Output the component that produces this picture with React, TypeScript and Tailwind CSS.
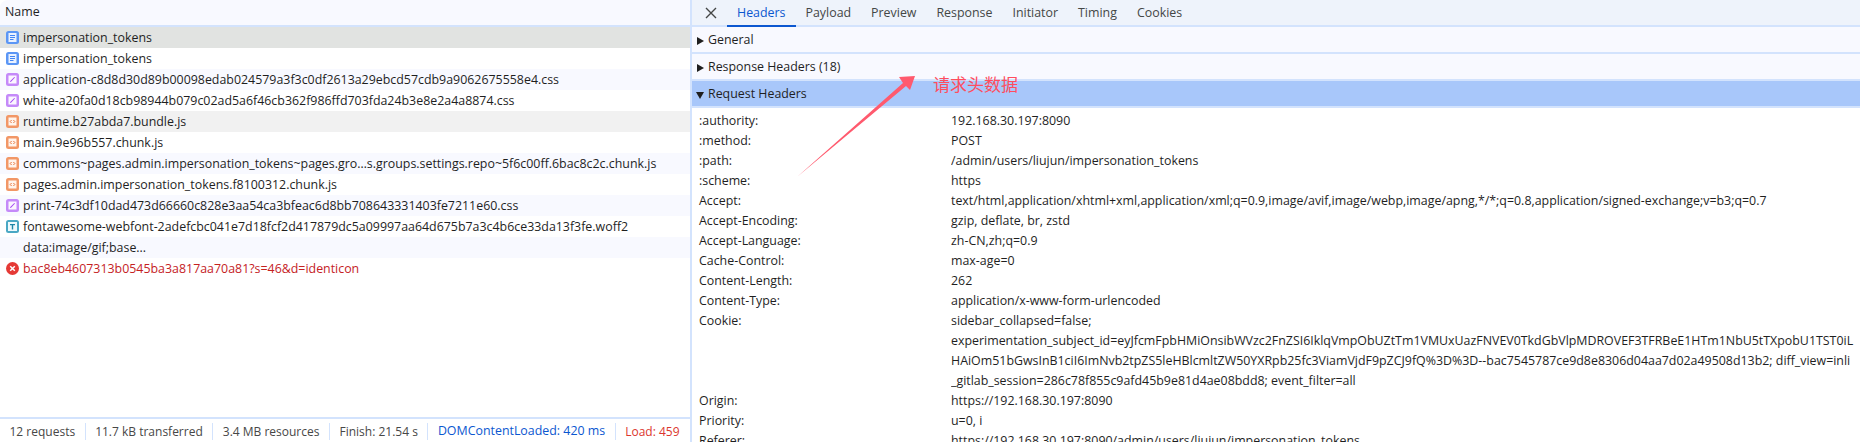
import React from "react";

const FONT = "font-['Open_Sans','Noto_Sans_CJK_SC',sans-serif]";

function DocIcon() {
  return (
    <svg width="13" height="13" viewBox="0 0 13 13" className="shrink-0">
      <rect width="13" height="13" rx="2.5" fill="#5b96f5" />
      <rect x="2.5" y="2" width="8" height="9" fill="#eaf2ff" />
      <path d="M4 4.5h5M4 6.5h5M4 8.5h3.5" stroke="#4285f4" strokeWidth="1" />
    </svg>
  );
}
function CssIcon() {
  return (
    <svg width="13" height="13" viewBox="0 0 13 13" className="shrink-0">
      <rect width="13" height="13" rx="2.5" fill="#c58af9" />
      <rect x="2.5" y="2.5" width="8" height="8" fill="#fbf6ff" />
      <path d="M4 9l1-.2L9 4.6 8.3 4 4.3 8z" fill="#a142f4" />
    </svg>
  );
}
function JsIcon() {
  return (
    <svg width="13" height="13" viewBox="0 0 13 13" className="shrink-0">
      <rect width="13" height="13" rx="2.5" fill="#f29766" />
      <rect x="2.5" y="2.5" width="8" height="8" fill="#fff4ec" />
      <path d="M5.6 5L4.2 6.5l1.4 1.5M7.4 5l1.4 1.5L7.4 8" stroke="#e8743b" strokeWidth="1" fill="none" />
    </svg>
  );
}
function FontIcon() {
  return (
    <svg width="13" height="13" viewBox="0 0 13 13" className="shrink-0">
      <rect width="13" height="13" rx="2.5" fill="#4aa8c4" />
      <rect x="2" y="2" width="9" height="9" fill="#eefafd" />
      <path d="M4 4h5v1.3H7.2V9.5H5.8V5.3H4z" fill="#1f87a8" />
    </svg>
  );
}
function ErrIcon() {
  return (
    <svg width="13" height="13" viewBox="0 0 13 13" className="shrink-0">
      <circle cx="6.5" cy="6.5" r="6.5" fill="#e53935" />
      <path d="M4.2 4.2l4.6 4.6M8.8 4.2l-4.6 4.6" stroke="#fff" strokeWidth="1.5" />
    </svg>
  );
}

const rows: { name: string; icon: React.ReactNode; bg: string; red?: boolean }[] = [
  { name: "impersonation_tokens", icon: <DocIcon />, bg: "bg-[#e1e3e1]" },
  { name: "impersonation_tokens", icon: <DocIcon />, bg: "bg-white" },
  { name: "application-c8d8d30d89b00098edab024579a3f3c0df2613a29ebcd57cdb9a9062675558e4.css", icon: <CssIcon />, bg: "bg-[#f8f9ff]" },
  { name: "white-a20fa0d18cb98944b079c02ad5a6f46cb362f986ffd703fda24b3e8e2a4a8874.css", icon: <CssIcon />, bg: "bg-white" },
  { name: "runtime.b27abda7.bundle.js", icon: <JsIcon />, bg: "bg-[#f1f1f1]" },
  { name: "main.9e96b557.chunk.js", icon: <JsIcon />, bg: "bg-white" },
  { name: "commons~pages.admin.impersonation_tokens~pages.gro…s.groups.settings.repo~5f6c00ff.6bac8c2c.chunk.js", icon: <JsIcon />, bg: "bg-[#f8f9ff]" },
  { name: "pages.admin.impersonation_tokens.f8100312.chunk.js", icon: <JsIcon />, bg: "bg-white" },
  { name: "print-74c3df10dad473d66660c828e3aa54ca3bfeac6d8bb708643331403fe7211e60.css", icon: <CssIcon />, bg: "bg-[#f8f9ff]" },
  { name: "fontawesome-webfont-2adefcbc041e7d18fcf2d417879dc5a09997aa64d675b7a3c4b6ce33da13f3fe.woff2", icon: <FontIcon />, bg: "bg-white" },
  { name: "data:image/gif;base...", icon: <span className="w-[13px] shrink-0" />, bg: "bg-[#f8f9ff]" },
  { name: "bac8eb4607313b0545ba3a817aa70a81?s=46&d=identicon", icon: <ErrIcon />, bg: "bg-white", red: true },
];

const headers: [string, string[]][] = [
  [":authority:", ["192.168.30.197:8090"]],
  [":method:", ["POST"]],
  [":path:", ["/admin/users/liujun/impersonation_tokens"]],
  [":scheme:", ["https"]],
  ["Accept:", ["text/html,application/xhtml+xml,application/xml;q=0.9,image/avif,image/webp,image/apng,*/*;q=0.8,application/signed-exchange;v=b3;q=0.7"]],
  ["Accept-Encoding:", ["gzip, deflate, br, zstd"]],
  ["Accept-Language:", ["zh-CN,zh;q=0.9"]],
  ["Cache-Control:", ["max-age=0"]],
  ["Content-Length:", ["262"]],
  ["Content-Type:", ["application/x-www-form-urlencoded"]],
  ["Cookie:", [
    "sidebar_collapsed=false;",
    "experimentation_subject_id=eyJfcmFpbHMiOnsibWVzc2FnZSI6IklqVmpObUZtTm1VMUxUazFNVEV0TkdGbVlpMDROVEF3TFRBeE1HTm1NbU5tTXpobU1TST0iL",
    "HAiOm51bGwsInB1ciI6ImNvb2tpZS5leHBlcmltZW50YXRpb25fc3ViamVjdF9pZCJ9fQ%3D%3D--bac7545787ce9d8e8306d04aa7d02a49508d13b2; diff_view=inli",
    "_gitlab_session=286c78f855c9afd45b9e81d4ae08bdd8; event_filter=all",
  ]],
  ["Origin:", ["https://192.168.30.197:8090"]],
  ["Priority:", ["u=0, i"]],
  ["Referer:", ["https://192.168.30.197:8090/admin/users/liujun/impersonation_tokens"]],
];

const tabs = ["Headers", "Payload", "Preview", "Response", "Initiator", "Timing", "Cookies"];

const stats: [string, string][] = [
  ["12 requests", "text-[#474747] text-[12px]"],
  ["11.7 kB transferred", "text-[#474747] text-[12px]"],
  ["3.4 MB resources", "text-[#474747] text-[12px]"],
  ["Finish: 21.54 s", "text-[#474747] text-[12px]"],
  ["DOMContentLoaded: 420 ms", "text-[#0b57d0] text-[12.4px]"],
  ["Load: 459", "text-[#dc362e] text-[12px]"],
];

function Section({ label, open, active }: { label: string; open?: boolean; active?: boolean }) {
  return (
    <div className={`h-[27px] flex items-center gap-[4px] pl-[4px] pt-[2px] border-b-2 border-[#d3e3fd] ${active ? "bg-[#a8c7fa]" : "bg-[#f8f9ff]"}`}>
      <svg width="8" height="8" viewBox="0 0 8 8" className="shrink-0">
        {open ? <path d="M0 1h8L4 8z" fill="#1f1f1f" /> : <path d="M1 0l7 4-7 4z" fill="#1f1f1f" />}
      </svg>
      <span>{label}</span>
    </div>
  );
}

export default function App() {
  return (
    <div className={`relative flex h-[442px] w-[1860px] overflow-hidden bg-white text-[12.4px] leading-none text-[#1f1f1f] ${FONT}`}>
      <div className="flex w-[690px] shrink-0 flex-col">
        <div className="h-[27px] shrink-0 overflow-hidden rounded-tl-lg border-b-2 border-[#d3e3fd] bg-[#f8f9ff] flex items-center pl-[5px]">
          <span>Name</span>
        </div>
        {rows.map((r, i) => (
          <div key={i} className={`flex h-[21px] shrink-0 items-center gap-[4px] overflow-hidden whitespace-nowrap pl-[6px] ${r.bg} ${r.red ? "text-[#c5221f]" : ""}`}>
            {r.icon}
            <span className="pt-[2px]">{r.name}</span>
          </div>
        ))}
        <div className="flex-1" />
        <div className="flex h-[25px] shrink-0 items-center border-t-2 border-[#d3e3fd] pt-[2px]">
          {stats.map(([t, c], i) => (
            <span key={i} className={`flex h-[17px] items-center whitespace-nowrap px-[9.5px] ${i < 5 ? "border-r border-[#d3e3fd]" : ""} ${c}`}>{t}</span>
          ))}
        </div>
      </div>

      <div className="flex min-w-0 flex-1 flex-col border-l-2 border-[#d3e3fd]">
        <div className="flex h-[27px] shrink-0 items-stretch border-b-2 border-[#d3e3fd] bg-[#eef3fb] pl-[11px]">
          <svg width="16" height="27" viewBox="0 0 16 27" className="mr-[8px] shrink-0">
            <path d="M3 8l10 10M13 8L3 18" stroke="#444746" strokeWidth="1.4" />
          </svg>
          {tabs.map((t, i) => (
            <span key={t} className={`relative flex items-center px-[10px] pt-[1px] ${i === 0 ? "text-[#0b57d0]" : "text-[#444746]"}`}>
              {t}
              {i === 0 && <span className="absolute inset-x-0 bottom-[-2px] h-[2px] bg-[#0b57d0]" />}
            </span>
          ))}
        </div>
        <Section label="General" />
        <Section label="Response Headers (18)" />
        <Section label="Request Headers" open active />
        <div className="min-h-0 flex-1 pt-[3px]">
          {headers.map(([k, vals]) => (
            <div key={k} className="flex">
              <div className="flex h-[20px] w-[259px] shrink-0 items-center pl-[7px]">{k}</div>
              <div className="min-w-0 flex-1 overflow-hidden whitespace-nowrap">
                {vals.map((v, i) => (
                  <div key={i} className="flex h-[20px] items-center">{v}</div>
                ))}
              </div>
            </div>
          ))}
        </div>
      </div>

      <svg width="1860" height="442" viewBox="0 0 1860 442" className="pointer-events-none absolute inset-0">
        <path d="M797 177L903 83 899 77 915 76 910 90 906 86z" fill="#ff5a6e" />
      </svg>
      <span className="absolute left-[933px] top-[76px] text-[17px] leading-[18px] text-[#ff4d5e]">请求头数据</span>
    </div>
  );
}
